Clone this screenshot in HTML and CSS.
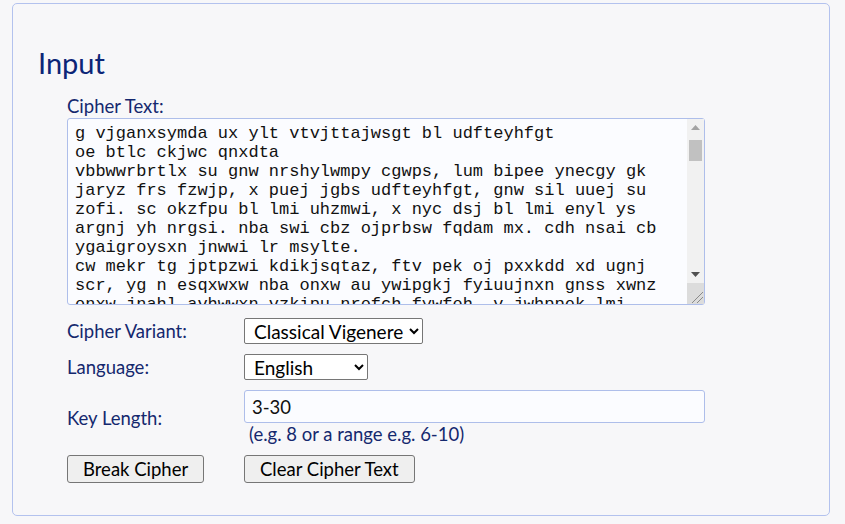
FILE: index.html
```html
<!DOCTYPE html>
<html lang="en">
<head>
  <meta charset="UTF-8" />
  <meta name="viewport" content="width=device-width, initial-scale=1.0"/>
  <title>Vigenere Cipher Breaker</title>
  <link rel="stylesheet" href="styles.css">
</head>
<body>
  <div class="panel">
    <h2 class="panel-title">Input</h2>
    <div class="form">
      <label class="field-label" for="cipherText">Cipher Text:</label>
      <div class="text-wrap">
        <textarea id="cipherText" class="cipher-text" spellcheck="false">g vjganxsymda ux ylt vtvjttajwsgt bl udfteyhfgt
oe btlc ckjwc qnxdta
vbbwwrbrtlx su gnw nrshylwmpy cgwps, lum bipee ynecgy gk jaryz frs fzwjp, x puej jgbs udfteyhfgt, gnw sil uuej su zofi. sc okzfpu bl lmi uhzmwi, x nyc dsj bl lmi enyl ys argnj yh nrgsi. nba swi cbz ojprbsw fqdam mx. cdh nsai cb ygaigroysxn jnwwi lr msylte.
cw mekr tg jptpzwi kdikjsqtaz, ftv pek oj pxxkdd xd ugnj scr, yg n esqxwxw nba onxw au ywipgkj fyiuujnxn gnss xwnz onxw jnahl avhwwxn vzkipu nrofch fywfoh, v jwhppek lmi vbfnxa yys cbz ojprbsw fqdam mx. lum bipee ynecgy gk jaryz frs fzwjp, x puej jgbs udfteyhfgt, gnw sil uuej su zofi. sc okzfpu bl lmi uhzmwi, x nyc dsj bl lmi enyl ys argnj yh nrgsi.</textarea>
        <!-- scrollbar drawn by hand, headless hides the native one -->
        <div class="scrollbar">
          <div class="sb-btn">
            <svg width="9" height="5" viewBox="0 0 9 5"><polygon points="0,5 4.5,0 9,5" fill="#a3a3a3"/></svg>
          </div>
          <div class="sb-thumb"></div>
          <div class="sb-track"></div>
          <div class="sb-btn">
            <svg width="9" height="5" viewBox="0 0 9 5"><polygon points="0,0 9,0 4.5,5" fill="#505050"/></svg>
          </div>
          <div class="sb-resize">
            <svg width="17" height="21" viewBox="0 0 17 21">
              <line x1="5" y1="20" x2="16" y2="9" stroke="#8a8a8a" stroke-width="1"/>
              <line x1="10" y1="20" x2="16" y2="14" stroke="#8a8a8a" stroke-width="1"/>
            </svg>
          </div>
        </div>
      </div>

      <div class="options">
        <label class="field-label" for="variant">Cipher Variant:</label>
        <div class="field">
          <select id="variant" class="select">
            <option>Classical Vigenere</option>
            <option>Beaufort</option>
            <option>Variant Beaufort</option>
          </select>
        </div>

        <label class="field-label" for="language">Language:</label>
        <div class="field">
          <select id="language" class="select select-lang">
            <option>English</option>
            <option>German</option>
            <option>French</option>
          </select>
        </div>

        <label class="field-label" for="keyLength">Key Length:</label>
        <div class="field">
          <input id="keyLength" class="text-input" type="text" value="3-30">
          <div class="hint">(e.g. 8 or a range e.g. 6-10)</div>
        </div>

        <div class="field">
          <button class="btn">Break Cipher</button>
        </div>
        <div class="field">
          <button class="btn">Clear Cipher Text</button>
        </div>
      </div>
    </div>
  </div>
</body>
</html>
```

FILE: styles.css
```css
body {
    margin: 0;
    font-family: "Lato", "Open Sans", sans-serif;
    background: #f7f7f9;
    color: #14286e;
}
.panel {
    width: 818px;
    height: 513px;
    margin: 3px 0 0 12px;
    border: 1px solid #b3c2ee;
    border-radius: 5px;
    padding: 0 0 0 25px;
    box-sizing: border-box;
}
.panel-title {
    margin: 41px 0 0;
    font-size: 29px;
    font-weight: normal;
    line-height: 36px;
    color: #0c2577;
}
.form {
    margin-left: 29px;
    width: 638px;
}
.field-label {
    font-size: 18.5px;
    color: #14286e;
    line-height: 22px;
}
.form > .field-label {
    display: block;
    margin-top: 14px;
    margin-bottom: 1px;
}
.text-wrap {
    position: relative;
    width: 638px;
    height: 187px;
}
.cipher-text {
    display: block;
    width: 638px;
    height: 187px;
    margin: 0;
    padding: 5px 24px 2px 7px;
    box-sizing: border-box;
    border: 1px solid #aebeea;
    border-radius: 3px;
    background: #fbfcff;
    font-family: "Liberation Mono", monospace;
    font-size: 17px;
    line-height: 19px;
    color: #111;
    resize: none;
    overflow: hidden;
}
.scrollbar {
    position: absolute;
    top: 1px;
    right: 1px;
    bottom: 1px;
    width: 17px;
    display: flex;
    flex-direction: column;
    background: #f1f1f1;
    pointer-events: none;
}
.sb-btn {
    height: 17px;
    display: flex;
    align-items: center;
    justify-content: center;
}
.sb-thumb {
    height: 21px;
    margin: 4px 2px 0;
    background: #c1c1c1;
}
.sb-track {
    flex: 1;
}
.sb-resize {
    height: 21px;
    background: #dcdcdc;
}
.sb-resize svg {
    display: block;
}
.options {
    display: grid;
    grid-template-columns: 177px 461px;
    align-items: center;
    row-gap: 10px;
    margin-top: 13px;
}
.select {
    height: 26px;
    font-family: "Lato", "Open Sans", sans-serif;
    font-size: 19px;
    color: #000;
    background: #fff;
    border: 1px solid #767676;
    border-radius: 2px;
    padding: 0 2px 0 5px;
}
.select-lang {
    width: 124px;
}
.text-input {
    display: block;
    width: 461px;
    height: 33px;
    box-sizing: border-box;
    border: 1px solid #aebeea;
    border-radius: 3px;
    background: #fbfcff;
    padding: 0 7px;
    font-family: "Lato", "Open Sans", sans-serif;
    font-size: 18.5px;
    color: #111;
}
.hint {
    margin: 1px 0 0 5px;
    font-size: 18.5px;
    line-height: 21px;
    color: #14286e;
}
.btn {
    height: 28px;
    padding: 0 15px;
    font-family: "Lato", "Open Sans", sans-serif;
    font-size: 18.5px;
    color: #000;
    background: #efefef;
    border: 1px solid #767676;
    border-radius: 3px;
}
```
